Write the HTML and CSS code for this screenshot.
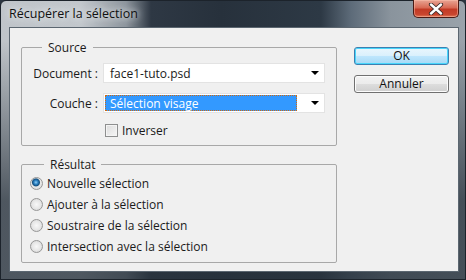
FILE: index.html
```html
<!DOCTYPE html>
<html lang="fr">

<head>
    <meta charset="UTF-8">
    <meta name="viewport" content="width=device-width, initial-scale=1.0">
    <title>Récupérer la sélection</title>
    <link rel="stylesheet" href="styles.css">
</head>

<body>
    <div class="window">
        <div class="titlebar">
            <span class="title">Récupérer la sélection</span>
            <div class="close">
                <svg width="16" height="12" viewBox="0 0 16 12">
                    <path d="M3 1.5 L13 10.5 M13 1.5 L3 10.5" stroke="#3a2a28" stroke-width="4.2" stroke-linecap="round" />
                    <path d="M3 1.5 L13 10.5 M13 1.5 L3 10.5" stroke="#ffffff" stroke-width="2.4" stroke-linecap="round" />
                </svg>
            </div>
        </div>

        <div class="client">
            <div class="main">
                <fieldset class="group">
                    <legend>Source</legend>
                    <div class="form-grid">
                        <label class="field-label">Document :</label>
                        <div class="combo">
                            <span class="value">face1-tuto.psd</span>
                            <span class="arrow"></span>
                        </div>

                        <label class="field-label">Couche :</label>
                        <div class="combo focused">
                            <span class="value">Sélection visage</span>
                            <span class="arrow"></span>
                        </div>

                        <span></span>
                        <label class="check">
                            <span class="box"></span>
                            Inverser
                        </label>
                    </div>
                </fieldset>

                <fieldset class="group result">
                    <legend>Résultat</legend>
                    <div class="radios">
                        <label class="radio checked"><span class="dot"></span>Nouvelle sélection</label>
                        <label class="radio"><span class="dot"></span>Ajouter à la sélection</label>
                        <label class="radio"><span class="dot"></span>Soustraire de la sélection</label>
                        <label class="radio"><span class="dot"></span>Intersection avec la sélection</label>
                    </div>
                </fieldset>
            </div>

            <div class="actions">
                <button class="btn default">OK</button>
                <button class="btn">Annuler</button>
            </div>
        </div>
    </div>
</body>

</html>
```

FILE: styles.css
```css
body {
    margin: 0;
    padding: 0;
    background-color: #2b3540;
    font-family: "Open Sans", "DejaVu Sans", sans-serif;
    font-size: 12px;
    color: #1a1a1a;
}

.window {
    width: 466px;
    height: 280px;
    box-sizing: border-box;
    padding: 0 6px 7px 8px;
    display: flex;
    flex-direction: column;
    background:
        linear-gradient(to bottom, rgba(40, 50, 60, 0) 0, rgba(40, 50, 60, 0) 40px, rgba(40, 50, 60, 0.75) 200px),
        linear-gradient(to right, #bfc4c9 0, #c2c7cc 80px, #8d959d 125px, #2e3844 150px, #27313c 220px, #2d3945 320px, #5d6b79 350px, #8a949d 390px, #9aa3ab 466px);
    border: 1px solid #1c232b;
    border-radius: 6px 6px 0 0;
}

.titlebar {
    height: 26px;
    display: flex;
    align-items: flex-start;
    justify-content: space-between;
}

.title {
    margin-top: 4px;
    font-size: 12.5px;
    color: #111;
    text-shadow: 0 0 6px #e8ebee, 0 0 10px #dfe3e6;
}

.close {
    width: 46px;
    height: 18px;
    margin-top: -1px;
    box-sizing: border-box;
    border: 1px solid #4a1a14;
    border-top: none;
    border-radius: 0 0 5px 5px;
    background: linear-gradient(to bottom, #e8a594 0, #d86a55 45%, #c23a25 55%, #c9452e 85%, #e07a5a 100%);
    box-shadow: inset 0 0 0 1px rgba(255, 200, 180, 0.45);
    display: flex;
    align-items: center;
    justify-content: center;
}

.client {
    flex: 1;
    display: flex;
    padding: 11px 0 0 11px;
    background-color: #f0f0f0;
    border: 1px solid #5b6670;
}

.main {
    width: 316px;
    display: flex;
    flex-direction: column;
    gap: 10px;
}

.group {
    margin: 0;
    padding: 7px 10px 6px 6px;
    border: 1px solid #a8a8a8;
    border-radius: 2px;
}

.group legend {
    margin-left: 14px;
    padding: 0 6px;
}

.form-grid {
    display: grid;
    grid-template-columns: 70px 222px;
    column-gap: 5px;
    row-gap: 10px;
    align-items: center;
}

.field-label {
    text-align: right;
}

.combo {
    height: 20px;
    box-sizing: border-box;
    display: flex;
    align-items: center;
    justify-content: space-between;
    padding: 0 5px 0 6px;
    background-color: #fff;
    border: 1px solid #e3e3e3;
}

.combo.focused {
    padding: 1px 5px 1px 1px;
}

.combo.focused .value {
    flex: 1;
    height: 16px;
    box-sizing: border-box;
    display: flex;
    align-items: center;
    padding-left: 4px;
    margin-right: 14px;
    background-color: #3399ff;
    color: #fff;
    border: 1px dotted #d06a10;
}

.arrow {
    width: 0;
    height: 0;
    border-left: 4px solid transparent;
    border-right: 4px solid transparent;
    border-top: 4px solid #000;
}

.check {
    display: flex;
    align-items: center;
    gap: 4px;
    margin-left: 2px;
    margin-top: -1px;
}

.box {
    width: 13px;
    height: 13px;
    box-sizing: border-box;
    border: 1px solid #8e8f8f;
    background: linear-gradient(135deg, #dcdcdc, #f6f6f6);
    box-shadow: inset 0 0 0 1px #f4f4f4;
}

.result {
    padding: 0 10px 5px 8px;
}

.radios {
    display: flex;
    flex-direction: column;
}

.radio {
    height: 21px;
    display: flex;
    align-items: center;
    gap: 4px;
}

.dot {
    width: 13px;
    height: 13px;
    box-sizing: border-box;
    border-radius: 50%;
    border: 1px solid #979797;
    background: radial-gradient(circle at 50% 50%, #f8f8f8 0, #e6e6e6 55%, #cfcfcf 100%);
}

.radio.checked .dot {
    background: radial-gradient(circle at 45% 40%, #8fd0f6 0, #2b7fc0 2px, #15507f 3.5px, #e8e8e8 4.5px, #d4d4d4 100%);
}

.actions {
    margin-left: 17px;
    margin-top: 8px;
    display: flex;
    flex-direction: column;
    gap: 10px;
}

.btn {
    width: 95px;
    height: 18px;
    padding: 0;
    font-family: inherit;
    font-size: 12px;
    line-height: 14px;
    color: #111;
    border: 1px solid #707070;
    border-radius: 3px;
    background: linear-gradient(to bottom, #f2f2f2 0, #ebebeb 50%, #dddddd 51%, #cfcfcf 100%);
    box-shadow: inset 0 0 0 1px #fcfcfc;
}

.btn.default {
    border-color: #3c7fb1;
    background: linear-gradient(to bottom, #eaf6fd 0, #d9f0fc 50%, #bee6fd 51%, #a7d9f5 100%);
    box-shadow: inset 0 0 0 1px #48d6fb;
}
```
